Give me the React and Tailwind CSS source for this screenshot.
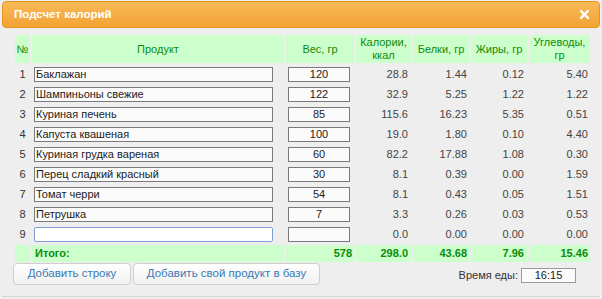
import React from 'react';

const rows = [
  ['Баклажан', '120', '28.8', '1.44', '0.12', '5.40'],
  ['Шампиньоны свежие', '122', '32.9', '5.25', '1.22', '1.22'],
  ['Куриная печень', '85', '115.6', '16.23', '5.35', '0.51'],
  ['Капуста квашеная', '100', '19.0', '1.80', '0.10', '4.40'],
  ['Куриная грудка вареная', '60', '82.2', '17.88', '1.08', '0.30'],
  ['Перец сладкий красный', '30', '8.1', '0.39', '0.00', '1.59'],
  ['Томат черри', '54', '8.1', '0.43', '0.05', '1.51'],
  ['Петрушка', '7', '3.3', '0.26', '0.03', '0.53'],
  ['', '', '0.0', '0.00', '0.00', '0.00'],
];

export default function App() {
  return <div className="w-[602px] h-[299px] bg-[#eeeeee] text-[11px] text-[#333] overflow-hidden" style={{
    fontFamily: '"Liberation Sans", Arial, sans-serif'
  }}>
      {/* заголовок */}
      <div className="mx-[2px] mt-[1px] h-[27px] rounded-[4px] border border-[#e8951f] bg-gradient-to-b from-[#f7ba57] to-[#f3a232] flex items-center justify-between pl-[11px] pr-[10px]">
        <span className="text-white font-bold text-[11.5px]">Подсчет калорий</span>
        <svg width="9" height="9" viewBox="0 0 9 9">
          <path d="M1 1 L8 8 M8 1 L1 8" stroke="white" strokeWidth="2.4" strokeLinecap="square" />
        </svg>
      </div>

      <div className="pl-[13px] pt-[5px]">
        <table className="table-fixed border-separate border-spacing-[2px] w-[579px]">
          <colgroup>
            <col className="w-[15px]" />
            <col className="w-[252px]" />
            <col className="w-[68px]" />
            <col className="w-[55px]" />
            <col className="w-[56px]" />
            <col className="w-[56px]" />
            <col className="w-[61px]" />
          </colgroup>
          <thead>
            <tr className="h-[28px] bg-[#ccffcc] text-[#0c8c0c] text-center leading-[13px]">
              <th className="font-normal p-0">№</th>
              <th className="font-normal p-0">Продукт</th>
              <th className="font-normal p-0">Вес, гр</th>
              <th className="font-normal p-0">Калории,<br />ккал</th>
              <th className="font-normal p-0">Белки, гр</th>
              <th className="font-normal p-0">Жиры, гр</th>
              <th className="font-normal p-0">Углеводы,<br />гр</th>
            </tr>
          </thead>
          <tbody>
            {rows.map((r, i) => <tr key={i} className="h-[18px]">
                <td className="p-0 text-center">{i + 1}</td>
                <td className="p-0 pl-[2px]">
                  <input readOnly value={r[0]} className={`block w-[239px] h-[15px] px-[1px] text-[#222] outline-none ${i === 8 ? 'border border-[#7f9fd6] rounded-[2px] bg-white' : 'border border-[#7a7a7a] bg-[#fbfbfb]'}`} />
                </td>
                <td className="p-0 pl-[2px]">
                  <input readOnly value={r[1]} className="block w-[62px] h-[15px] text-center text-[#222] border border-[#7a7a7a] bg-[#fbfbfb] outline-none" />
                </td>
                <td className="p-0 pr-[3px] text-right text-[#444]">{r[2]}</td>
                <td className="p-0 pr-[2px] text-right text-[#444]">{r[3]}</td>
                <td className="p-0 pr-[3px] text-right text-[#444]">{r[4]}</td>
                <td className="p-0 pr-[2px] text-right text-[#444]">{r[5]}</td>
              </tr>)}
            <tr className="h-[17px] bg-[#ccffcc] text-[#0c8c0c] font-bold">
              <td className="p-0"></td>
              <td className="p-0 pl-[3px]">Итого:</td>
              <td className="p-0 pr-[2px] text-right">578</td>
              <td className="p-0 pr-[3px] text-right">298.0</td>
              <td className="p-0 pr-[2px] text-right">43.68</td>
              <td className="p-0 pr-[3px] text-right">7.96</td>
              <td className="p-0 pr-[2px] text-right">15.46</td>
            </tr>
          </tbody>
        </table>

        <div className="flex items-center mt-[-1px] pr-[26px]">
          <button className="w-[118px] h-[22px] rounded-[4px] border border-[#cfcfcf] bg-gradient-to-b from-white to-[#f1f1f1] text-[#3a78b4] text-[11.5px]">Добавить строку</button>
          <button className="ml-[2px] w-[187px] h-[22px] rounded-[4px] border border-[#cfcfcf] bg-gradient-to-b from-white to-[#f1f1f1] text-[#3a78b4] text-[11.5px]">Добавить свой продукт в базу</button>
          <div className="ml-auto flex items-center gap-[3px] pt-[2px]">
            <span className="text-[#333]">Время еды:</span>
            <input readOnly value="16:15" className="w-[55px] h-[15px] text-center text-[#222] border border-[#9a9a9a] bg-[#fbfbfb] outline-none" />
          </div>
        </div>
      </div>

      <div className="mt-[11px] mx-[2px] border-t border-[#d6d6d6]"></div>
    </div>;
}
